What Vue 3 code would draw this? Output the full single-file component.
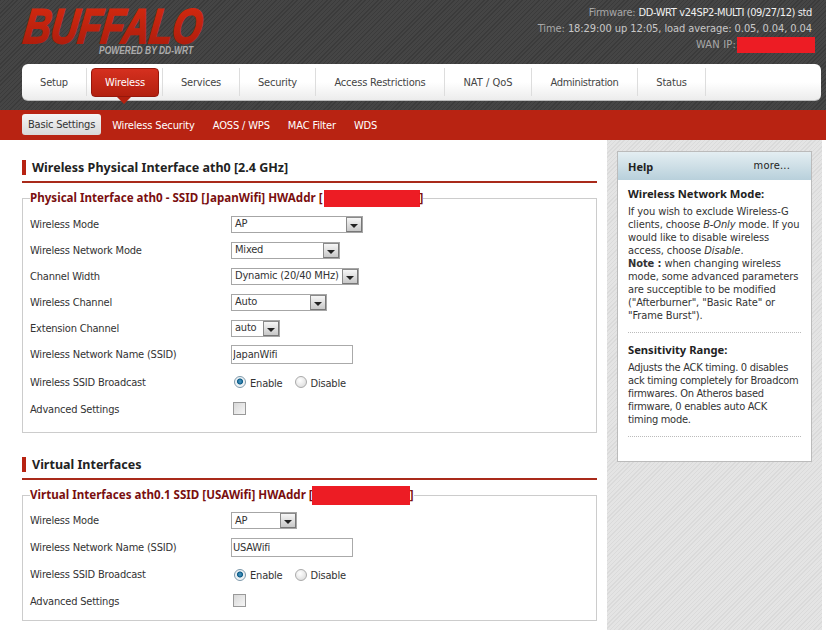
<script setup>
const tabs = ['Setup', 'Wireless', 'Services', 'Security', 'Access Restrictions', 'NAT / QoS', 'Administration', 'Status']
const subs = ['Wireless Security', 'AOSS / WPS', 'MAC Filter', 'WDS']
</script>

<template>
  <div class="page">
    <header class="top">
      <svg class="logo" width="260" height="60" viewBox="0 0 260 60">
        <defs>
          <linearGradient id="brandfill" x1="0" y1="0" x2="0" y2="1">
            <stop offset="0" stop-color="#d92b10" />
            <stop offset="1" stop-color="#a81b0c" />
          </linearGradient>
        </defs>
        <text class="brand" transform="translate(22 43) scale(.77 1) skewX(-10)" fill="url(#brandfill)" stroke="url(#brandfill)" stroke-width="1.8">BUFFALO</text>
        <text class="powered" transform="translate(99 54) scale(.77 1)" fill="#ababab">POWERED BY DD-WRT</text>
      </svg>
      <div class="status">
        <div><span class="dim">Firmware:</span> <span class="val">DD-WRT v24SP2-MULTI (09/27/12) std</span></div>
        <div class="time"><span class="dim">Time:</span> 18:29:00 up 12:05, load average: 0.05, 0.04, 0.04</div>
        <div class="wan"><span class="dim">WAN IP:</span><span class="red wanred"></span></div>
      </div>
    </header>
    <nav class="nav">
      <div v-for="t in tabs" :key="t" class="tab" :class="{ cur: t === 'Wireless' }">
        <span v-if="t === 'Wireless'" class="active">{{ t }}</span>
        <template v-else>{{ t }}</template>
      </div>
    </nav>
    <div class="gap"></div>
    <div class="sub">
      <span class="subon">Basic Settings</span>
      <span v-for="s in subs" :key="s" class="subitem">{{ s }}</span>
    </div>

    <div class="body">
      <main class="main">
        <h2 class="h first">Wireless Physical Interface ath0 [2.4 GHz]</h2>
        <fieldset class="fs one">
          <legend>Physical Interface ath0 - SSID [JapanWifi] HWAddr [<span class="red macred"></span>]</legend>
          <div class="row"><label>Wireless Mode</label><div class="sel" style="width:132px"><span>AP</span><i></i></div></div>
          <div class="row"><label>Wireless Network Mode</label><div class="sel" style="width:109px"><span>Mixed</span><i></i></div></div>
          <div class="row"><label>Channel Width</label><div class="sel" style="width:128px"><span>Dynamic (20/40 MHz)</span><i></i></div></div>
          <div class="row"><label>Wireless Channel</label><div class="sel" style="width:96px"><span>Auto</span><i></i></div></div>
          <div class="row"><label>Extension Channel</label><div class="sel" style="width:49px"><span>auto</span><i></i></div></div>
          <div class="row"><label>Wireless Network Name (SSID)</label><input class="txt" value="JapanWifi" /></div>
          <div class="row rad"><label>Wireless SSID Broadcast</label><span class="radio on"></span><span class="rl">Enable</span><span class="radio"></span><span class="rl">Disable</span></div>
          <div class="row"><label>Advanced Settings</label><span class="check"></span></div>
        </fieldset>

        <h2 class="h second">Virtual Interfaces</h2>
        <fieldset class="fs two">
          <legend>Virtual Interfaces ath0.1 SSID [USAWifi] HWAddr [<span class="red macred wide"></span>]</legend>
          <div class="row"><label>Wireless Mode</label><div class="sel" style="width:66px"><span>AP</span><i></i></div></div>
          <div class="row"><label>Wireless Network Name (SSID)</label><input class="txt" value="USAWifi" /></div>
          <div class="row rad"><label>Wireless SSID Broadcast</label><span class="radio on"></span><span class="rl">Enable</span><span class="radio"></span><span class="rl">Disable</span></div>
          <div class="row"><label>Advanced Settings</label><span class="check"></span></div>
        </fieldset>
      </main>

      <aside class="side">
        <div class="help">
          <div class="helphead"><b>Help</b><span>more...</span></div>
          <div class="helpbody">
            <h4>Wireless Network Mode:</h4>
            <p>If you wish to exclude Wireless-G<br />clients, choose <em>B-Only</em> mode. If you<br />would like to disable wireless<br />access, choose <em>Disable</em>.<br /><b>Note :</b> when changing wireless<br />mode, some advanced parameters<br />are succeptible to be modified<br />("Afterburner", "Basic Rate" or<br />"Frame Burst").</p>
            <h4>Sensitivity Range:</h4>
            <p class="tight">Adjusts the ACK timing. 0 disables<br />ack timing completely for Broadcom<br />firmwares. On Atheros based<br />firmware, 0 enables auto ACK<br />timing mode.</p>
          </div>
        </div>
      </aside>
    </div>
  </div>
</template>

<style>
html, body { margin: 0; background: #fff; overflow: hidden; }
</style>

<style scoped>
.page { width: 826px; height: 630px; overflow: hidden; font: 11px/14px "DejaVu Sans Condensed", "DejaVu Sans", sans-serif; font-stretch: condensed; letter-spacing: -.2px; color: #333; background: repeating-linear-gradient(135deg, #3b3b3b 0 1px, #454545 1px 3px) 0 0 / auto 110px no-repeat, #fff; position: relative; }
.top { height: 64px; display: flex; justify-content: space-between; box-sizing: border-box; }
.logo { display: block; flex: none; }
.brand { font: italic 700 49px "Liberation Sans", sans-serif; letter-spacing: 0; }
.powered { font: italic 700 11px "Liberation Sans", sans-serif; letter-spacing: 0; }
.status { padding: 5px 14px 0 0; text-align: right; color: #c8c8c8; line-height: 16px; }
.time { letter-spacing: -.08px; }
.dim { color: #a8a8a8; }
.val { color: #f0f0f0; letter-spacing: -.38px; }
.wan { display: flex; justify-content: flex-end; margin-right: -3px; }
.wan .dim { letter-spacing: .2px; }
.red { background: #ed1c24; display: inline-block; }
.wanred { width: 78px; height: 16px; margin-left: 1px; }
.nav { margin: 0 5px 0 22px; height: 37px; background: linear-gradient(#fff, #fff 50%, #ececec); border-radius: 6px; display: flex; align-items: stretch; border-bottom: 1px solid #bbb; box-sizing: border-box; }
.tab { box-sizing: border-box; padding-top: 1px; border-right: 1px solid #ddd; display: flex; align-items: center; justify-content: center; margin: 4px 0; color: #444; white-space: nowrap; }
.tab:nth-child(1) { width: 65px; }
.tab:nth-child(2) { width: 76px; padding-top: 0; }
.tab:nth-child(3) { width: 77px; }
.tab:nth-child(4) { width: 76px; }
.tab:nth-child(5) { width: 129px; }
.tab:nth-child(6) { width: 87px; letter-spacing: 0; }
.tab:nth-child(7) { width: 106px; letter-spacing: -.3px; }
.tab:nth-child(8) { width: 68px; }
.active { box-sizing: border-box; width: 68px; margin-right: -1px; text-align: center; background: linear-gradient(#d5301f, #b3200f); color: #fff; border: 1px solid #96180c; border-radius: 4px; height: 29px; line-height: 27px; position: relative; }
.active::after { content: ""; position: absolute; left: 50%; margin-left: -8px; top: 28px; border: 7px solid transparent; border-top-color: #b3200f; border-bottom: 0; }
.gap { height: 9px; }
.sub { height: 30px; background: #b82312; display: flex; align-items: center; padding-left: 22px; gap: 18px; color: #fff; box-sizing: border-box; letter-spacing: -.15px; }
.subon { background: linear-gradient(#f4f4f4, #d8d8d8); color: #333; border-radius: 3px; height: 21px; line-height: 22px; padding: 0 6px; margin-right: -7px; margin-top: -1px; letter-spacing: -.2px; }
.subitem { white-space: nowrap; padding-top: 1px; }
.body { display: flex; height: 490px; }
.main { width: 575px; margin-left: 22px; margin-right: 10px; }
.h { margin: 0; font: 700 12.5px/15px "Noto Sans", sans-serif; font-stretch: normal; letter-spacing: 0; color: #222; border-bottom: 2px solid #a92a1a; position: relative; padding: 0 0 5px 10px; height: 16px; }
.h::before { content: ""; position: absolute; left: 0; top: 0; width: 4px; height: 15px; background: #b82312; }
.first { margin-top: 20px; }
.second { margin-top: 24px; }
.fs { margin: 6px 0 0; padding: 4px 7px 0; border: 1px solid #ccc; box-sizing: border-box; width: 575px; min-width: 0; }
.one { height: 244px; }
.two { height: 135px; padding-top: 3px; }
.one label { padding-top: 2px; }
legend { font: 700 11.6px/18px "Noto Sans", sans-serif; letter-spacing: 0; color: #7a0f0f; padding: 0; height: 18px; white-space: nowrap; }
.macred { width: 96px; height: 17px; margin: 1px 0 0 1px; vertical-align: top; }
.macred.wide { width: 98px; height: 19px; margin: 0 0 0 -1px; }
.row { display: flex; align-items: center; height: 26px; }
.one .rad { height: 28px; margin-top: 1px; }
.two .row { height: 27px; }
.row label { width: 201px; flex: none; }
.sel { display: flex; border: 1px solid #a6a6a6; box-sizing: border-box; height: 17px; align-items: center; justify-content: space-between; padding-left: 3px; background: #fff; white-space: nowrap; }
.sel i { width: 16px; height: 15px; border: 1px solid #8a8a8a; border-right-color: #777; border-bottom-color: #777; background: linear-gradient(#f6f6f6, #c8c8c8); box-sizing: border-box; position: relative; flex: none; }
.sel i::after { content: ""; position: absolute; left: 3px; top: 6px; border: 4px solid transparent; border-top-color: #222; border-bottom: 0; }
.txt { width: 122px; height: 19px; box-sizing: border-box; border: 1px solid #aaa; padding: 0 1px; font: inherit; font-stretch: condensed; letter-spacing: inherit; color: #333; outline: none; }
.radio { width: 12px; height: 12px; border-radius: 50%; border: 1px solid #aaa; background: radial-gradient(circle at 40% 35%, #fff, #d6d6d6); box-sizing: border-box; margin-left: 3px; flex: none; }
.radio.on { background: radial-gradient(circle at 50% 45%, #3d8cb8 0 1px, #0b5a86 2.6px, #e8eef2 3.4px, #fff); border-color: #7d98aa; }
.rl { margin: 3px 9px 0 4px; }
.check { width: 13px; height: 13px; border: 1px solid #999; background: linear-gradient(135deg, #d8d8d8, #f6f6f6); box-sizing: border-box; margin-left: 2px; margin-top: -2px; }
.side { width: 215px; height: 490px; background: repeating-linear-gradient(135deg, #dadada 0 1px, #e4e4e4 1px 3px); padding: 11px 10px 0; box-sizing: border-box; flex: none; }
.help { background: #fff; border: 1px solid #bbb; height: 311px; box-sizing: border-box; }
.helphead { height: 28px; background: linear-gradient(#e4eef2, #b8d0db); display: flex; justify-content: space-between; align-items: center; padding: 0 21px 0 10px; color: #222; }
.helphead b { font: 700 11px "Noto Sans", sans-serif; letter-spacing: 0; }
.helphead span { letter-spacing: .2px; }
.helpbody { padding: 7px 10px 0; }
.helpbody h4 { margin: 0 0 4px; font: 700 11.2px/14px "Noto Sans", sans-serif; letter-spacing: 0; color: #222; }
.helpbody p { margin: 0 0 10px; padding-bottom: 10px; border-bottom: 1px dotted #bbb; line-height: 13px; color: #333; letter-spacing: -.1px; white-space: nowrap; }
.helpbody p.tight { letter-spacing: -.28px; }
</style>
